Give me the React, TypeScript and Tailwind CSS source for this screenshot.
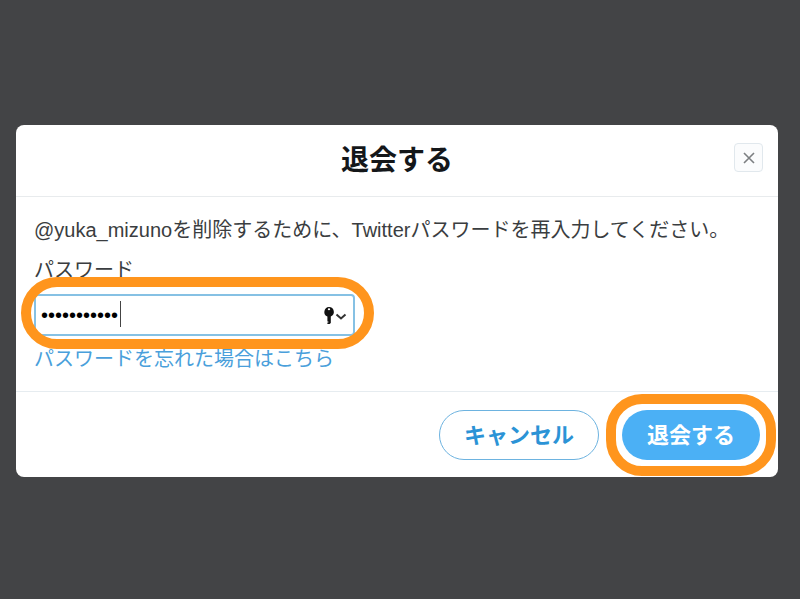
import React, { useState } from 'react';

function KeyIcon() {
  return (
    <svg viewBox="0 0 12 19" className="w-3 h-[19px]" aria-hidden="true">
      <path
        fill="#111"
        fillRule="evenodd"
        d="M6 1a5 5 0 0 1 1.8 9.6V17L6.6 18H4.4v-1.4h1v-1h-1v-5A5 5 0 0 1 6 1Zm0 1.2a1.2 1 0 1 0 0 2 1.2 1 0 0 0 0-2Z"
      />
    </svg>
  );
}

function ChevronIcon() {
  return (
    <svg viewBox="0 0 12 8" className="w-3 h-2 mt-1" aria-hidden="true">
      <path d="M1.5 1.5 6 5.5l4.5-4" fill="none" stroke="#333" strokeWidth="2" />
    </svg>
  );
}

function PasswordField() {
  const [password, setPassword] = useState('mizuno12345');

  return (
    <div className="relative w-[321px] max-w-full">
      <input
        id="password"
        type="password"
        value={password}
        onChange={(e) => setPassword(e.target.value)}
        className="block w-full h-[42px] pl-[5px] pr-14 border-2 border-[#86c1e4] rounded-sm bg-white text-[20px] text-black caret-transparent outline-none"
      />
      {/* Text caret */}
      <span className="absolute left-[86px] top-[7px] w-px h-[26px] bg-[#444] pointer-events-none" />
      <button
        type="button"
        aria-label="保存したパスワード"
        className="absolute right-2 top-0 h-full flex items-center"
      >
        <KeyIcon />
        <ChevronIcon />
      </button>
      {/* Highlight ring */}
      <span className="absolute -left-[13px] -right-[19px] -top-[17px] -bottom-[13px] rounded-full border-10 border-[#ff951d] pointer-events-none" />
    </div>
  );
}

export default function App() {
  return (
    <div className="min-h-screen bg-[#434446] pt-[125px] pl-4 pr-[22px] font-['Liberation_Sans','Noto_Sans_CJK_JP',sans-serif]">
      <div role="dialog" aria-labelledby="dialog-title" className="bg-white rounded-lg">
        <header className="relative flex items-center justify-center h-[72px] border-b border-[#e8ebed]">
          <h1 id="dialog-title" className="text-[28px] leading-8 font-bold text-[#14171a]">
            退会する
          </h1>
          <button
            type="button"
            aria-label="閉じる"
            className="absolute right-[15px] top-[18px] flex items-center justify-center size-[29px] rounded border border-[#e1e8ed] bg-[#fbfcfd]"
          >
            <svg viewBox="0 0 12 12" className="size-3" aria-hidden="true">
              <path d="M1 1l10 10M11 1 1 11" fill="none" stroke="#7c7f82" strokeWidth="1.6" />
            </svg>
          </button>
        </header>

        <form onSubmit={(e) => e.preventDefault()}>
          <div className="px-[18px] pt-[17px] pb-4 text-[20px] leading-8 text-[#3a3d40]">
            <p className="whitespace-nowrap">
              @yuka_mizunoを削除するために、Twitterパスワードを再入力してください。
            </p>
            <label htmlFor="password" className="block my-2">
              パスワード
            </label>
            <PasswordField />
            <a href="#forgot" className="block w-fit mt-[7px] text-[#4a9fdb]">
              パスワードを忘れた場合はこちら
            </a>
          </div>

          <footer className="flex justify-end gap-[23px] border-t border-[#e6ecf0] px-[18px] pt-[18px] pb-[17px] text-[22px] font-bold">
            <button
              type="button"
              className="h-[50px] px-6 rounded-full border border-[#6db3e0] text-[#2b93d6]"
            >
              キャンセル
            </button>
            <div className="relative">
              <button type="submit" className="h-[50px] px-[25px] rounded-full bg-[#4bb0f5] text-white">
                退会する
              </button>
              {/* Highlight ring */}
              <span className="absolute -inset-4 rounded-[36px] border-10 border-[#ff951d] pointer-events-none" />
            </div>
          </footer>
        </form>
      </div>
    </div>
  );
}
